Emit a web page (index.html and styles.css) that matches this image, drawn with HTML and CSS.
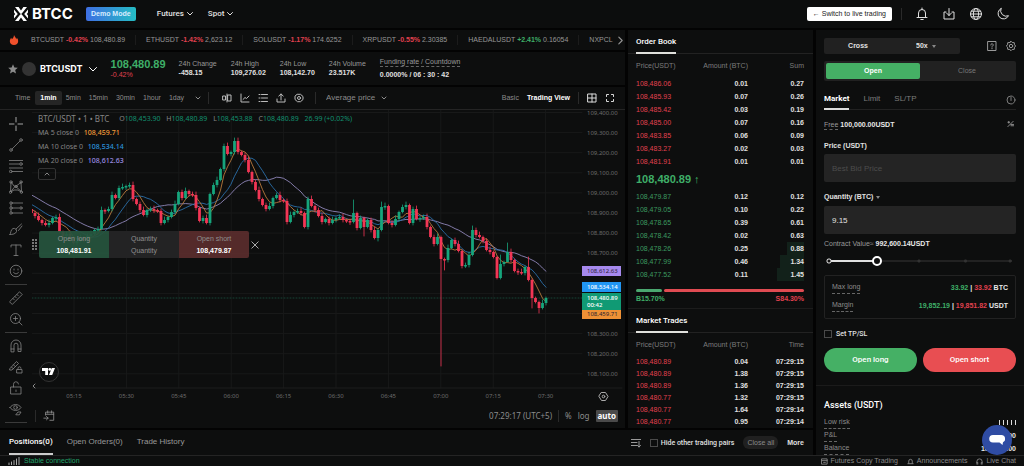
FILE: index.html
```html
<!DOCTYPE html>
<html lang="en">
<head>
    <meta charset="UTF-8">
    <meta name="viewport" content="width=device-width, initial-scale=1.0">
    <title>BTCUSDT | BTCC</title>
    <link rel="stylesheet" href="styles.css">
</head>
<body>
    <header class="topbar">
        <a class="logo" href="#">
            <svg viewBox="0 0 14 14" width="14" height="14" fill="#fff"><path d="M1 0h3.6L7 3.4 9.4 0H13L8.6 5.6 7 7.4 5.4 5.6zM1 14h3.6L7 10.6 9.4 14H13L8.6 8.4 7 6.6 5.4 8.4zM0 2.4 3.8 7 0 11.6V8.4L1.2 7 0 5.6zM14 2.4 10.2 7l3.8 4.6V8.4L12.8 7 14 5.6z"/></svg>
            <span>BTCC</span>
        </a>
        <button class="demo">Demo Mode</button>
        <nav class="nav">
            <button>Futures <svg class="chev" viewBox="0 0 8 8"><path d="M1.5 2.5 4 5l2.5-2.5"/></svg></button>
            <button>Spot <svg class="chev" viewBox="0 0 8 8"><path d="M1.5 2.5 4 5l2.5-2.5"/></svg></button>
        </nav>
        <div class="topbar-right">
            <button class="switch"><span class="arrow">←</span> Switch to live trading</button>
            <span class="sep"></span>
            <button class="icon-btn" aria-label="Notifications"><svg viewBox="0 0 14 14"><path d="M2 10.5h10M3.5 10V6a3.5 3.5 0 0 1 7 0v4l1 .5M3.5 10l-1 .5M5.8 12.5h2.4M7 1v1.5"/></svg></button>
            <button class="icon-btn" aria-label="Download"><svg viewBox="0 0 14 14"><path d="M7 1.5v7M4.5 6 7 8.5 9.500 6M4 5H2v7h10V5h-2"/></svg></button>
            <button class="icon-btn" aria-label="Language"><svg viewBox="0 0 14 14"><circle cx="7" cy="7" r="5.5"/><ellipse cx="7" cy="7" rx="2.600" ry="5.5"/><path d="M1.5 7h11M2.300 4.200h9.400M2.300 9.800h9.400"/></svg></button>
            <button class="icon-btn" aria-label="Theme"><svg viewBox="0 0 14 14"><path d="M5 1.500a5.500 5.500 0 1 0 7.500 7.200A5.600 5.600 0 0 1 5 1.500z"/></svg></button>
        </div>
    </header>

    <main class="layout">
        <section class="market">
            <div class="ticker">
                <svg class="flame" viewBox="0 0 10 12"><path d="M5 0c.5 2 2.500 3 2.500 5 .6-.4.8-1 .8-1.600C9.500 4.500 10 6 10 7.500 10 10 8 12 5 12S0 10 0 7.500C0 5.500 1 4.500 1.500 3.200c.6.600.8 1.200.8 1.800C4 4 4.800 2.500 5 0z" fill="#f0512c"/></svg>
                <div class="ticker-list">
                    <a href="#">BTCUSDT <b class="down">-0.42%</b> 108,480.89</a>
                    <a href="#">ETHUSDT <b class="down">-1.42%</b> 2,623.12</a>
                    <a href="#">SOLUSDT <b class="down">-1.17%</b> 174.6252</a>
                    <a href="#">XRPUSDT <b class="down">-0.55%</b> 2.30385</a>
                    <a href="#">HAEDALUSDT <b class="up">+2.41%</b> 0.16054</a>
                    <a href="#">NXPCL</a>
                </div>
                <button class="next" aria-label="Next"><svg viewBox="0 0 8 8"><path d="M2.500 1 5.500 4l-3 3"/></svg></button>
            </div>

            <div class="pair">
                <button class="pair-name">
                    <svg class="star" viewBox="0 0 10 10"><path d="M5 .3 6.400 3.500l3.400.3-2.600 2.300.8 3.400L5 7.700 2 9.500l.8-3.400L.2 3.800l3.400-.3z" fill="#8b8b8b"/></svg>
                    <span class="coin"></span>
                    <span>BTCUSDT</span>
                    <svg class="chev" viewBox="0 0 8 8"><path d="M.5 2.500 4 6l3.500-3.500"/></svg>
                </button>
                <div class="last">
                    <strong>108,480.89</strong>
                    <span class="down">-0.42%</span>
                </div>
                <dl class="stats">
                    <div><dt>24h Change</dt><dd>-458.15</dd></div>
                    <div><dt>24h High</dt><dd>109,276.02</dd></div>
                    <div><dt>24h Low</dt><dd>108,142.70</dd></div>
                    <div><dt>24h Volume</dt><dd>23.517K</dd></div>
                    <div class="funding"><dt><span class="hint">Funding rate / Countdown</span></dt><dd>0.0000% / 06 : 30 : 42</dd></div>
                </dl>
            </div>

            <div class="toolbar">
                <span class="toolbar-label">Time</span>
                <div class="intervals">
                    <button class="active">1min</button>
                    <button>5min</button>
                    <button>15min</button>
                    <button>30min</button>
                    <button>1hour</button>
                    <button>1day</button>
                    <button class="more-times" aria-label="More intervals"><svg class="chev" viewBox="0 0 8 8"><path d="M2 3l2 2 2-2"/></svg></button>
                </div>
                <span class="sep"></span>
                <div class="tools">
                    <button aria-label="Candles"><svg viewBox="0 0 10 10"><path d="M1 3h2.500v4H1zM6 2h3v6H6zM5 1v8"/></svg></button>
                    <button aria-label="Indicators"><svg viewBox="0 0 10 10"><path d="M1 1v8h8M3 6.500 5 4.500l1.500 1L9 3"/></svg></button>
                    <button aria-label="List"><svg viewBox="0 0 10 10"><path d="M1 1.500h1M3.500 1.500h6M1 5h1M3.500 5h6M1 8.500h1M3.500 8.500h6"/></svg></button>
                    <button aria-label="Share"><svg viewBox="0 0 10 10"><path d="M1 6v3h8V6M5 7V1M2.800 3 5 1l2.200 2"/></svg></button>
                    <button aria-label="Settings"><svg viewBox="0 0 10 10"><path d="M3.500 1.300h3L9 3.500v3L6.500 8.700h-3L1 6.500v-3z"/><circle cx="5" cy="5" r="1.500"/></svg></button>
                </div>
                <span class="sep"></span>
                <label class="pick average">
                    <select aria-label="Price type"><option>Average price</option></select>
                    <svg class="chev" viewBox="0 0 8 8"><path d="M2 3l2 2 2-2"/></svg>
                </label>
                <div class="views">
                    <button>Basic</button>
                    <button class="active">Trading View</button>
                    <span class="sep"></span>
                    <button aria-label="Grid"><svg viewBox="0 0 10 10"><path d="M1 1h8v8H1zM5 1v8M1 5h8"/></svg></button>
                    <button aria-label="Fullscreen"><svg viewBox="0 0 10 10"><path d="M1.500 3.500v-2h2M6.500 1.500h2v2M8.500 6.500v2h-2M3.500 8.500h-2v-2"/></svg></button>
                </div>
            </div>

            <div class="chart">
                <div class="draw">
                    <div class="draw-group">
                        <button aria-label="Cross"><svg viewBox="0 0 14 14" class="bright"><path d="M7 0v5M7 9v5M0 7h5M9 7h5"/></svg></button>
                        <button aria-label="Trend line"><svg viewBox="0 0 14 14"><circle cx="2" cy="12" r="1.300"/><circle cx="12" cy="2" r="1.300"/><path d="M3 11l8-8"/></svg></button>
                        <button aria-label="Fib retracement"><svg viewBox="0 0 14 14"><path d="M0 1.500h14M0 5h10M0 9h14M3.500 12.500H14"/><circle cx="12" cy="5" r="1.300"/><circle cx="1.800" cy="12.500" r="1.300"/></svg></button>
                        <button aria-label="Patterns"><svg viewBox="0 0 14 14"><path d="M2 2.500 1.500 12 6 6.500M2.500 2.500 5 6l1.500.5L12 2.500M12 2.500l.5 9L7 6.800M2.500 11.500 5 10h4l3 2"/><circle cx="2" cy="2" r="1.200"/><circle cx="12" cy="2" r="1.200"/><circle cx="7" cy="6.500" r="1.200"/><circle cx="1.500" cy="12.200" r="1.200"/><circle cx="12.500" cy="12.200" r="1.200"/></svg></button>
                        <button aria-label="Positions"><svg viewBox="0 0 14 14"><path d="M3.500 2H14M3.500 7H10M3.500 12H14M2 3.500v2M2 8.500v2"/><circle cx="2" cy="2" r="1.200"/><circle cx="2" cy="7" r="1.200"/><circle cx="12" cy="7" r="1.200"/><circle cx="2" cy="12" r="1.200"/></svg></button>
                        <button aria-label="Brush"><svg viewBox="0 0 14 14"><path d="M1 12.500c1-1 .500-5 3-6 2-.6 4 .8 3.500 3-.6 2.500-4 3-6.500 3zM7 7l5.500-5M9.500 8.500 13 4"/></svg></button>
                        <button aria-label="Text"><svg viewBox="0 0 14 14"><path d="M2 4V2h10v2M7 2v10.500M5 12.500h4"/></svg></button>
                        <button aria-label="Emoji"><svg viewBox="0 0 14 14"><circle cx="7" cy="7" r="5.800"/><path d="M4.500 8.300c.8 2 4.200 2 5 0M5 5v1M9 5v1"/></svg></button>
                    </div>
                    <hr>
                    <div class="draw-group">
                        <button aria-label="Measure"><svg viewBox="0 0 14 14"><path d="M.8 10.500 10.500.8l2.700 2.700-9.700 9.700zM4 7.500l1.300 1.300M6 5.500l1.300 1.300M8 3.500l1.300 1.300"/></svg></button>
                        <button aria-label="Zoom in"><svg viewBox="0 0 14 14"><circle cx="6.500" cy="6.500" r="5"/><path d="M10.200 10.200 13 13M4.500 6.500h4M6.500 4.500v4"/></svg></button>
                    </div>
                    <hr>
                    <div class="draw-group">
                        <button aria-label="Magnet"><svg viewBox="0 0 14 14"><path d="M2 12.500V6a5 5 0 0 1 10 0v6.500H9V6.200a2 2 0 0 0-4 0v6.300zM2 10h3M9 10h3"/></svg></button>
                        <button aria-label="Keep drawing"><svg viewBox="0 0 14 14"><path d="M1 8.500 7.500 1.500l2 2L3 10H1zM2.500 7l2 2M4.500 4.800l2 2M8 9.500h5V13H8zM9 9.500V8.300a1.500 1.500 0 0 1 3 0"/></svg></button>
                        <button aria-label="Lock"><svg viewBox="0 0 14 14"><path d="M2 6h10v7H2zM4.500 6V3.500a2.500 2.500 0 0 1 5-.5M7 9v1.500"/></svg></button>
                        <button aria-label="Hide"><svg viewBox="0 0 14 14"><path d="M1 5.500c2.500-4 8.500-4 11 0-2.500 4-8.500 4-11 0z"/><circle cx="6.500" cy="5.500" r="1.800"/><path d="M7 12.500l2-2.500h3l-1.500 2.500z"/></svg></button>
                    </div>
                    <hr>
                </div>

                <div class="plot-wrap">
                    <svg id="plot" class="plot" viewBox="32 110 593 294" role="img" aria-label="BTC/USDT 1 minute candles"></svg>

                    <div class="legend">
                        <div class="legend-main"><span>BTC/USDT • 1 • BTC</span> <span class="ohlc">O<i>108,453.90</i> H<i>108,480.89</i> L<i>108,453.88</i> C<i>108,480.89</i> <i>26.99 (+0.02%)</i></span></div>
                        <div>MA 5 close 0 <b class="ma5">108,459.71</b></div>
                        <div>MA 10 close 0 <b class="ma10">108,534.14</b></div>
                        <div>MA 20 close 0 <b class="ma20">108,612.63</b></div>
                        <button aria-label="Collapse legend"><svg class="chev" viewBox="0 0 8 8"><path d="M2 5l2-2 2 2"/></svg></button>
                    </div>

                    <div class="quick">
                        <span class="grip"></span>
                        <button class="quick-long"><span>Open long</span><b>108,481.91</b></button>
                        <div class="quick-qty"><span>Quantity</span><span>Quantity</span></div>
                        <button class="quick-short"><span>Open short</span><b>108,479.87</b></button>
                        <button class="quick-close" aria-label="Close"><svg viewBox="0 0 8 8"><path d="M.8.8l6.400 6.400M7.200.8.8 7.200"/></svg></button>
                    </div>

                    <a class="tv" href="#" aria-label="TradingView"><svg viewBox="0 0 14 10" fill="#fff"><path d="M0 1h6v7H3.200V4H0zM9.800 1H13L10.200 8H7z"/><circle cx="7.800" cy="2.400" r="1.400"/></svg></a>

                    <div class="chart-foot">
                        <span class="sep"></span>
                        <button aria-label="Go to date"><svg viewBox="0 0 14 14"><path d="M3 6V2.500h9.500V12H8M3 5h9.500M5.500 1v2.500M10 1v2.500M1 9.500h5M4 7.500l2 2-2 2"/></svg></button>
                        <div class="foot-right">
                            <span class="clock">07:29:17 (UTC+5)</span>
                            <span class="sep"></span>
                            <button>%</button>
                            <button>log</button>
                            <button class="auto">auto</button>
                        </div>
                    </div>
                </div>
            </div>
        </section>

        <section class="book">
            <h2><span>Order Book</span></h2>
            <table class="orders">
                <thead><tr><th>Price(USDT)</th><th>Amount (BTC)</th><th>Sum</th></tr></thead>
                <tbody class="asks">
                    <tr><td>108,486.06</td><td>0.01</td><td>0.27</td></tr>
                    <tr><td>108,485.93</td><td>0.07</td><td>0.26</td></tr>
                    <tr><td>108,485.42</td><td>0.03</td><td>0.19</td></tr>
                    <tr><td>108,485.00</td><td>0.07</td><td>0.16</td></tr>
                    <tr><td>108,483.85</td><td>0.06</td><td>0.09</td></tr>
                    <tr><td>108,483.27</td><td>0.02</td><td>0.03</td></tr>
                    <tr><td>108,481.91</td><td>0.01</td><td>0.01</td></tr>
                </tbody>
                <tbody class="mid">
                    <tr><td colspan="3">108,480.89<span>↑</span></td></tr>
                </tbody>
                <tbody class="bids">
                    <tr><td>108,479.87</td><td>0.12</td><td>0.12</td></tr>
                    <tr><td>108,479.05</td><td>0.10</td><td>0.22</td></tr>
                    <tr><td>108,478.65</td><td>0.39</td><td>0.61</td></tr>
                    <tr><td>108,478.42</td><td>0.02</td><td>0.63</td></tr>
                    <tr><td>108,478.26</td><td>0.25</td><td class="depth" style="--depth: 30%">0.88</td></tr>
                    <tr><td>108,477.99</td><td>0.46</td><td class="depth" style="--depth: 42%">1.34</td></tr>
                    <tr><td>108,477.52</td><td>0.11</td><td class="depth" style="--depth: 48%">1.45</td></tr>
                </tbody>
            </table>
            <div class="ratio">
                <span class="ratio-buy" style="width: 15.7%"></span>
                <span class="ratio-sell"></span>
            </div>
            <div class="ratio-text"><b class="up">B15.70%</b><b class="down">S84.30%</b></div>

            <h2 class="trades-title"><span>Market Trades</span></h2>
            <table class="trades">
                <thead><tr><th>Price(USDT)</th><th>Amount (BTC)</th><th>Time</th></tr></thead>
                <tbody class="asks">
                    <tr><td>108,480.89</td><td>0.04</td><td>07:29:15</td></tr>
                    <tr><td>108,480.89</td><td>1.38</td><td>07:29:15</td></tr>
                    <tr><td>108,480.89</td><td>1.36</td><td>07:29:15</td></tr>
                    <tr><td>108,480.77</td><td>1.32</td><td>07:29:15</td></tr>
                    <tr><td>108,480.77</td><td>1.64</td><td>07:29:14</td></tr>
                    <tr><td>108,480.77</td><td>0.95</td><td>07:29:14</td></tr>
                </tbody>
            </table>
        </section>

        <section class="positions">
            <div class="pos-tabs">
                <button class="active">Positions(0)</button>
                <button>Open Orders(0)</button>
                <button>Trade History</button>
            </div>
            <div class="pos-tools">
                <button aria-label="Sort"><svg viewBox="0 0 10 10"><path d="M0 1.500h10M0 4.500h6M0 7.500h6M8 3.500v5.500M6.500 7.500 8 9l1.500-1.500"/></svg></button>
                <label class="check"><input type="checkbox"> Hide other trading pairs</label>
                <button class="close-all">Close all</button>
                <a href="#">More</a>
            </div>
        </section>

        <aside class="order">
            <div class="margin-row">
                <div class="margin-mode">
                    <button>Cross</button>
                    <label class="pick leverage">
                        <select aria-label="Leverage"><option>50x</option></select>
                        <span class="caret"></span>
                    </label>
                </div>
                <button class="small-icon" aria-label="Help"><svg viewBox="0 0 10 10"><path d="M1 .5h8v9H1zM3.800 4a1.200 1.200 0 1 1 1.800 1c-.4.200-.6.400-.6 1M5 7.200v.6"/></svg></button>
                <button class="small-icon" aria-label="Preferences"><svg viewBox="0 0 10 10"><path d="M5 .3 6.200 1.500 8.300 1.700 8.500 3.800 9.700 5 8.500 6.200 8.300 8.300 6.200 8.500 5 9.700 3.800 8.500 1.700 8.300 1.500 6.200.3 5 1.500 3.800 1.700 1.700 3.800 1.500z"/><circle cx="5" cy="5" r="1.700"/></svg></button>
            </div>
            <div class="side">
                <button class="active">Open</button>
                <button>Close</button>
            </div>
            <div class="types">
                <button class="active">Market</button>
                <button>Limit</button>
                <button>SL/TP</button>
                <svg viewBox="0 0 10 10"><circle cx="5" cy="5" r="4"/><path d="M5 2.500v3"/></svg>
            </div>
            <div class="free">
                <span><span class="hint">Free</span> <b>100,000.00USDT</b></span>
                <svg viewBox="0 0 8 8"><path d="M1 7l6-6M1 2h2M2 1v2M4.500 6h3M4.500 4.500h3"/></svg>
            </div>
            <label class="field-label" for="price">Price (USDT)</label>
            <input class="field" id="price" type="text" placeholder="Best Bid Price">
            <div class="field-label unit">
                <label for="qty">Quantity (BTC)</label>
                <span class="caret"></span>
            </div>
            <input class="field" id="qty" type="text" value="9.15">
            <div class="contract">Contract Value≈ <b>992,600.14USDT</b></div>
            <input class="slider" type="range" min="0" max="100" value="26" aria-label="Quantity percent">
            <div class="limits">
                <div><span class="hint">Max long</span><b><i class="up">33.92</i> | <i class="down">33.92</i> BTC</b></div>
                <div><span class="hint">Margin</span><b><i class="up">19,852.19</i> | <i class="down">19,851.82</i> USDT</b></div>
            </div>
            <label class="check tpsl"><input type="checkbox"> Set TP/SL</label>
            <div class="actions">
                <button class="long">Open long</button>
                <button class="short">Open short</button>
            </div>
            <div class="assets">
                <h2>Assets (USDT)</h2>
                <div><span class="hint">Low risk</span><span class="bars"><i></i><i></i><i></i><i></i><i></i></span></div>
                <div><span class="hint">P&amp;L</span><b>0.00</b></div>
                <div><span class="hint">Balance</span><b>100,000.00</b></div>
            </div>
        </aside>
    </main>

    <footer class="status">
        <div class="signal"><svg viewBox="0 0 12 8"><path d="M1 8V6M3.500 8V5M6 8V3.500M8.500 8V2M11 8V0"/></svg> Stable connection</div>
        <nav class="status-links">
            <a href="#"><svg viewBox="0 0 8 8"><path d="M1 1h6v6H1zM1 3h6M3 5h2"/></svg>Futures Copy Trading</a>
            <a href="#"><svg viewBox="0 0 8 8"><path d="M1 6.500h6M2 6V3.500a2 2 0 0 1 4 0V6"/></svg>Announcements</a>
            <a href="#"><svg viewBox="0 0 8 8"><path d="M1 7V4a3 3 0 0 1 6 0v3M1 5h1v2M7 5H6v2"/></svg>Live Chat</a>
        </nav>
    </footer>

    <button class="chat" aria-label="Chat"><svg viewBox="0 0 16 12"><path d="M4 1h8a3.800 3.800 0 0 1 2 7.200L13.500 11 10.500 8.600H4A3.800 3.800 0 0 1 4 1z"/></svg></button>

    <script src="chart.js"></script>
</body>
</html>
```

FILE: styles.css
```css
* {
    margin: 0;
    padding: 0;
    box-sizing: border-box;
}

:root {
    --bg: #0d0e0e;
    --line: #222;
    --text: #e0e0e0;
    --green: #3fae68;
    --red: #e0414f;
}

body {
    font-family: 'Liberation Sans', Arial, sans-serif;
    font-size: 7px;
    line-height: 10px;
    background: #030303;
    color: var(--text);
    height: 100vh;
    display: flex;
    flex-direction: column;
    overflow: hidden;
}

button,
input,
select {
    font: inherit;
    color: inherit;
    background: none;
    border: 0;
    outline: 0;
    appearance: none;
}

button,
select {
    cursor: pointer;
}

a {
    color: inherit;
    text-decoration: none;
}

i {
    font-style: normal;
}

svg {
    display: block;
    flex: none;
    stroke-linecap: round;
    stroke-linejoin: round;
}

button svg,
.chev,
.types svg,
.free svg,
.status svg {
    fill: none;
    stroke: currentColor;
    stroke-width: 1;
}

.chev {
    width: 8px;
    height: 8px;
}

.up {
    color: var(--green);
}

.down {
    color: var(--red);
}

.sep {
    width: 1px;
    height: 12px;
    background: #2a2a2a;
}

.hint {
    padding-bottom: 1px;
    border-bottom: 1px dashed #666;
}

.caret {
    border: 2px solid transparent;
    border-top: 3px solid #888;
    border-bottom: 0;
}

/* Top bar */
.topbar {
    display: flex;
    align-items: center;
    flex: none;
    height: 28px;
    padding: 0 14px;
    margin-bottom: 2px;
    background: #0c0d0d;
}

.logo {
    display: flex;
    align-items: center;
    gap: 4px;
    font: 700 15px/24px Inter, sans-serif;
    color: #fff;
}

.demo {
    height: 14px;
    width: 50px;
    margin-left: 13px;
    border-radius: 2px;
    font-weight: 700;
    color: #d8ecff;
    background: linear-gradient(90deg, #3f6fe3, #25bcc4);
}

.nav {
    display: flex;
    gap: 14px;
    margin-left: 21px;
    font: 500 8px/12px Roboto, sans-serif;
}

.nav button,
.pair-name {
    display: flex;
    align-items: center;
    gap: 2px;
}

.topbar-right {
    display: flex;
    align-items: center;
    gap: 13px;
    margin-left: auto;
}

.switch {
    height: 14px;
    padding: 0 6px;
    border-radius: 2px;
    background: #fff;
    color: #222;
}

.topbar-right .sep {
    margin: 0 0 0 -4px;
}

.icon-btn svg {
    width: 14px;
    height: 14px;
}

/* Main grid */
.layout {
    flex: 1;
    min-height: 0;
    display: grid;
    grid-template-columns: minmax(0, 1fr) 185px 208px;
    grid-template-rows: minmax(0, 1fr) 25px;
    grid-template-areas: "market book order" "positions positions order";
    gap: 2px 3px;
}

.market {
    grid-area: market;
    display: flex;
    flex-direction: column;
    gap: 2px;
    min-width: 0;
}

.ticker,
.pair,
.toolbar,
.chart,
.book,
.positions,
.order {
    background: var(--bg);
}

.ticker {
    display: flex;
    align-items: center;
    height: 20px;
    padding: 0 0 0 9px;
    color: #969696;
}

.flame {
    width: 10px;
    height: 10px;
}

.ticker-list {
    flex: 1;
    display: flex;
    overflow: hidden;
    white-space: nowrap;
    margin-left: 2px;
}

.ticker-list a {
    padding: 0 10px;
    border-right: 1px solid #1c1c1c;
}

.ticker-list a:last-child {
    padding-right: 0;
    border: 0;
}

.next svg {
    width: 9px;
    height: 9px;
}

.pair {
    display: flex;
    align-items: center;
    height: 33px;
    padding: 0 8px;
}

.pair-name {
    font: 700 9px/12px Inter, sans-serif;
    color: #fff;
}

.pair-name .star {
    width: 10px;
    height: 10px;
    stroke: none;
}

.coin {
    width: 14px;
    height: 14px;
    margin: 0 2px;
    border-radius: 50%;
    background: #333;
}

.pair-name .chev {
    margin-left: 4px;
}

.last {
    display: flex;
    flex-direction: column;
    margin-left: 14px;
}

.last strong {
    font-size: 11px;
    line-height: 12px;
    color: var(--green);
}

.stats {
    display: flex;
    gap: 14px;
    margin-left: 13px;
    line-height: 9px;
    white-space: nowrap;
}

.stats dt {
    color: #999;
}

.stats dd {
    font-weight: 700;
}

.funding dt {
    margin-top: -2px;
    margin-bottom: 4px;
}

.toolbar {
    display: flex;
    align-items: center;
    height: 22px;
    padding: 0 10px 0 15px;
    color: #8c8c8c;
    white-space: nowrap;
}

.intervals {
    display: flex;
    align-items: center;
    margin-left: 5px;
}

.intervals button {
    height: 14px;
    padding: 0 4px;
}

.intervals .active {
    padding: 0 5px;
    border-radius: 2px;
    background: #252525;
    color: #fff;
    font-weight: 700;
}

.intervals .more-times {
    padding: 0 6px;
}

.tools {
    display: flex;
    gap: 8px;
    margin: 0 11px 0 13px;
    color: #bbb;
}

.tools svg,
.views svg {
    width: 10px;
    height: 10px;
}

.pick {
    display: flex;
    align-items: center;
}

.average {
    gap: 4px;
    margin-left: 10px;
    font-size: 8px;
}

.views {
    display: flex;
    align-items: center;
    gap: 8px;
    margin-left: auto;
}

.views .active {
    color: #fff;
    font-weight: 700;
}

.views button[aria-label] {
    color: #ddd;
}

/* Chart */
.chart {
    flex: 1;
    min-height: 0;
    display: flex;
    margin-top: -2px;
    border-top: 1px solid #242424;
}

.draw {
    width: 32px;
    padding-top: 7px;
    display: flex;
    flex-direction: column;
    align-items: center;
    gap: 6px;
    color: #858585;
}

.draw-group {
    display: flex;
    flex-direction: column;
    gap: 7px;
}

.draw svg {
    width: 14px;
    height: 14px;
    stroke-width: 0.8;
}

.draw .bright {
    color: #ccc;
}

.draw hr {
    width: 22px;
    border: 0;
    border-top: 1px solid #3a3a3a;
}

.plot-wrap {
    position: relative;
    flex: 1;
    min-width: 0;
    display: flex;
    flex-direction: column;
    font-family: 'Noto Sans', sans-serif;
}

.plot {
    flex: 1;
    width: 100%;
    min-height: 0;
}

.plot text {
    font-size: 6px;
    fill: #6c6c6c;
}

.plot .tag-text {
    fill: #fff;
    font-weight: 500;
}

.plot .tag-dark {
    fill: #2a2130;
}

.legend {
    position: absolute;
    top: 2px;
    left: 6px;
    line-height: 14px;
    color: #858585;
    white-space: nowrap;
}

.legend-main {
    display: flex;
    gap: 10px;
    font-size: 8px;
}

.legend i {
    margin-right: 4px;
    color: #12906f;
}

.legend .ohlc {
    font-size: 7px;
}

.legend b {
    font-weight: 500;
    margin-left: 3px;
}

.ma5 {
    color: #f19a37;
}

.ma10 {
    color: #2b93dd;
}

.legend .ma20 {
    color: #9a8be0;
}

.legend button {
    display: block;
    padding: 1px 4px;
    border: 1px solid #333;
    border-radius: 2px;
}

.quick {
    position: absolute;
    top: 121px;
    left: 0;
    display: flex;
    align-items: center;
    font-family: 'Liberation Sans', Arial, sans-serif;
}

.quick-long,
.quick-qty,
.quick-short {
    width: 70px;
    height: 27px;
    display: flex;
    flex-direction: column;
    align-items: center;
    justify-content: center;
    gap: 2px;
    color: #909090;
}

.quick b {
    color: #fff;
}

.quick-long {
    background: rgba(38, 84, 62, 0.94);
    border-radius: 2px 0 0 2px;
}

.quick-qty {
    background: rgba(36, 36, 37, 0.97);
}

.quick-short {
    background: rgba(88, 44, 44, 0.95);
    border-radius: 0 2px 2px 0;
}

.grip {
    width: 6px;
    height: 12px;
    margin-right: 1px;
    background: radial-gradient(circle at 1px 1px, #777 1px, transparent 1px) 0 0 / 3px 3px;
}

.quick-close {
    margin-left: 2px;
    color: #aaa;
}

.quick-close svg {
    width: 8px;
    height: 8px;
}

.tv {
    position: absolute;
    left: 7px;
    bottom: 46px;
    width: 20px;
    height: 20px;
    display: grid;
    place-items: center;
    border: 1px solid #333;
    border-radius: 50%;
}

.tv svg {
    width: 14px;
    height: 10px;
}

.chart-foot {
    flex: none;
    height: 24px;
    display: flex;
    align-items: center;
    gap: 7px;
    padding: 0 7px 0 3px;
    color: #8c8c8c;
}

.chart-foot svg {
    width: 12px;
    height: 12px;
}

.foot-right {
    display: flex;
    align-items: center;
    gap: 6px;
    margin-left: auto;
    font-size: 8px;
}

.auto {
    padding: 1px 2px;
    border-radius: 1px;
    background: #4a4a4a;
    color: #fff;
    font-weight: 700;
}

/* Order book */
.book {
    grid-area: book;
    overflow: hidden;
}

h2 {
    font: 500 8px/12px Roboto, sans-serif;
    color: #fff;
}

.book h2 {
    height: 24px;
    padding-left: 8px;
    border-bottom: 1px solid var(--line);
}

.book h2 span {
    display: inline-block;
    height: 24px;
    padding-top: 6px;
    border-bottom: 2px solid #e0e0dc;
}

.book table {
    width: 168px;
    margin-left: 8px;
    table-layout: fixed;
    border-collapse: collapse;
}

.book th {
    height: 23px;
    font-weight: 400;
    text-align: right;
    color: #7c7c7c;
    white-space: nowrap;
}

.book td {
    height: 13px;
    text-align: right;
    font-weight: 700;
}

.book .trades td {
    height: 12px;
}

.book th:first-child,
.book td:first-child {
    text-align: left;
    font-weight: 400;
}

.book .asks td:first-child {
    color: var(--red);
}

.book .bids td:first-child {
    color: #3c9a60;
}

.book .mid td {
    height: 22px;
    font-size: 11px;
    font-weight: 700;
    color: var(--green);
}

.mid span {
    margin-left: 3px;
    font-weight: 400;
}

.depth {
    background: linear-gradient(to left, #12211a var(--depth), transparent var(--depth));
}

.ratio {
    display: flex;
    gap: 2px;
    margin: 8px 9px 2px 8px;
}

.ratio span {
    height: 3px;
    border-radius: 2px;
}

.ratio-buy {
    background: #4ba870;
}

.ratio-sell {
    flex: 1;
    background: #e04b52;
}

.ratio-text {
    display: flex;
    justify-content: space-between;
    padding: 0 9px 4px 8px;
    border-bottom: 1px solid #1c1c1c;
}

/* Positions bar */
.positions {
    grid-area: positions;
    display: flex;
    justify-content: space-between;
    align-items: center;
    padding: 0 9px;
}

.pos-tabs {
    display: flex;
    gap: 14px;
    font-size: 8px;
    color: #999;
}

.pos-tabs button {
    height: 25px;
    border-bottom: 2px solid transparent;
}

.pos-tabs .active {
    color: #fff;
    border-color: #ccc;
    font-family: Roboto, sans-serif;
    font-weight: 500;
}

.pos-tools {
    display: flex;
    align-items: center;
    gap: 9px;
    font-weight: 700;
}

.pos-tools svg {
    width: 10px;
    height: 10px;
    color: #999;
}

.check {
    display: flex;
    align-items: center;
    gap: 3px;
    font-family: Roboto, sans-serif;
    font-weight: 500;
}

.check input {
    width: 8px;
    height: 8px;
    border: 1px solid #4a4a4a;
}

.close-all {
    height: 13px;
    padding: 0 4px;
    border-radius: 6px;
    background: #202020;
    color: #8a8a8a;
    font-weight: 400;
}

/* Order form */
.order {
    grid-area: order;
    display: flex;
    flex-direction: column;
    padding: 8px 8px 0;
    overflow: hidden;
}

.order > * {
    flex: none;
}

.margin-row {
    display: flex;
    align-items: center;
    height: 16px;
}

.margin-mode {
    display: grid;
    grid-template-columns: 1fr 1fr;
    justify-items: center;
    flex: 1;
    margin-right: 25px;
    line-height: 16px;
    font-weight: 700;
    border-radius: 2px;
    background: #212121;
}

.leverage {
    gap: 4px;
}

.small-icon {
    margin-left: 2px;
    color: #999;
}

.small-icon + .small-icon {
    margin-left: 9px;
}

.small-icon svg,
.types svg {
    width: 10px;
    height: 10px;
}

.side {
    display: flex;
    height: 20px;
    margin-top: 7px;
    padding: 2px;
    border-radius: 2px;
    background: #212121;
    color: #777;
}

.side button {
    flex: 1;
    border-radius: 2px;
}

.side .active {
    background: #45b065;
    color: #fff;
    font-weight: 700;
}

.types {
    display: flex;
    align-items: center;
    gap: 14px;
    height: 20px;
    margin: 9px 0 10px;
    font-size: 8px;
    color: #7c7c7c;
    border-bottom: 1px solid var(--line);
}

.types button {
    height: 20px;
    border-bottom: 2px solid transparent;
}

.types .active {
    color: #fff;
    border-color: #ddd;
    font-family: Roboto, sans-serif;
    font-weight: 700;
}

.types svg {
    margin-left: auto;
}

.free {
    display: flex;
    justify-content: space-between;
    height: 10px;
    padding-right: 2px;
    color: #999;
}

.free svg {
    width: 7px;
    height: 8px;
}

.order b {
    color: #e8e8e8;
}

.field-label {
    height: 10px;
    margin: 11px 0 3px;
    font-weight: 700;
}

.field {
    height: 28px;
    width: 100%;
    padding: 0 8px;
    border-radius: 2px;
    background: #242424;
    font-size: 8px;
}

.field::placeholder {
    color: #4c4c4c;
}

.unit {
    display: flex;
    align-items: center;
    gap: 3px;
    margin-bottom: 4px;
    margin-top: 10px;
}

.contract {
    margin-top: 5px;
    color: #999;
}

.slider {
    height: 10px;
    margin: 7px 4px 9px 2px;
    background:
        radial-gradient(circle at 3px 5px, #111 1px, #ddd 2px, transparent 3px),
        radial-gradient(circle at 50% 5px, #333 1px, transparent 2px),
        radial-gradient(circle at 75% 5px, #333 1px, transparent 2px),
        radial-gradient(circle at 99% 5px, #333 1px, transparent 2px),
        linear-gradient(90deg, transparent 4px, #e0e0e0 4px 26%, #222 26%) center / 100% 2px no-repeat;
}

.slider::-webkit-slider-thumb {
    appearance: none;
    width: 10px;
    height: 10px;
    border: 2px solid #fff;
    border-radius: 50%;
    background: #111;
}

.limits {
    padding: 3px 7px;
    border: 1px solid #222;
    border-radius: 2px;
}

.limits div,
.assets div {
    display: flex;
    justify-content: space-between;
    align-items: center;
}

.limits div {
    height: 18px;
}

.limits,
.assets {
    color: #8c8c8c;
}

.limits .up {
    color: var(--green);
}

.limits .down {
    color: var(--red);
}

.tpsl {
    margin: 10px 0 9px;
    gap: 4px;
}

.actions {
    display: grid;
    grid-template-columns: 1fr 1fr;
    gap: 6px;
    font: 500 8px/12px Roboto, sans-serif;
    color: #fff;
}

.actions button {
    height: 24px;
    border-radius: 12px;
}

.long {
    background: #45b065;
}

.short {
    background: #e84e52;
}

.assets {
    margin: 13px -8px 0;
    padding: 13px 8px 0;
    border-top: 1px solid #1b1b1b;
}

.assets h2 {
    font: 500 9px/12px Roboto, sans-serif;
    margin-bottom: 5px;
}

.assets div {
    height: 13px;
}

.bars {
    display: flex;
    gap: 3px;
}

.bars i {
    width: 1px;
    height: 5px;
    background: #ddd;
}

/* Status bar */
.status {
    flex: none;
    height: 11px;
    display: flex;
    align-items: center;
    justify-content: space-between;
    padding: 0 8px;
    background: var(--bg);
    border-top: 1px solid #242424;
    color: #8a8a8a;
}

.signal {
    display: flex;
    align-items: center;
    gap: 4px;
    color: #23a36c;
}

.signal svg {
    width: 12px;
    height: 8px;
    color: #aaa;
}

.status-links {
    display: flex;
    gap: 9px;
}

.status-links a {
    display: flex;
    align-items: center;
    gap: 3px;
}

.status-links svg {
    width: 7px;
    height: 7px;
}

.chat {
    position: fixed;
    right: 12px;
    bottom: 11px;
    width: 30px;
    height: 30px;
    display: grid;
    place-items: center;
    border-radius: 50%;
    background: #2f4ca3;
}

.chat svg {
    width: 16px;
    height: 12px;
    stroke: none;
    fill: #fff;
}
```

FILE: chart.js
```js
const plot = document.getElementById('plot');
const NS = 'http://www.w3.org/2000/svg';

const UP = '#16a57c';
const DOWN = '#f23655';
const STEP = 3.5;
const LAST_X = 546;
const BOTTOM = 388;

// Candle closes on the plot's vertical scale, one per minute
const closes = [
    213, 216, 220, 223, 225, 223, 218, 217, 232, 236, 234, 239, 243, 241, 238, 240,
    236, 234, 230, 229, 210, 211, 209, 195, 198, 188, 187, 186, 185, 199, 204, 210,
    215, 210, 209, 210, 211, 223, 220, 217, 212, 204, 192, 198, 191, 194, 195, 208,
    221, 218, 223, 194, 185, 180, 169, 146, 154, 152, 141, 152, 155, 160, 172, 182,
    190, 199, 205, 209, 206, 198, 195, 200, 201, 222, 215, 212, 211, 213, 227, 199,
    206, 210, 216, 222, 219, 223, 220, 218, 217, 220, 221, 222, 213, 228, 218, 227,
    220, 230, 238, 230, 207, 206, 223, 225, 219, 212, 207, 205, 223, 209, 219, 218,
    217, 227, 237, 244, 237, 259, 260, 248, 240, 244, 251, 266, 265, 255, 230, 235,
    237, 241, 250, 252, 257, 278, 264, 262, 252, 260, 271, 272, 273, 267, 280,
    298, 302, 308, 303, 298
];

// Long wicks, counted back from the last candle: [top, bottom]
const wicks = {
    89: [138, 154], 55: [200, 223], 52: [217, 236], 48: [229, 241], 47: [202, 231],
    30: [236, 366], 29: [258, 270], 21: [226, 256], 14: [256, 279], 13: [255, 279],
    11: [243, 262], 5: [257, 281], 4: [279, 308], 2: [301, 313]
};

function draw(tag, attrs, text) {
    const el = document.createElementNS(NS, tag);
    for (const key in attrs) el.setAttribute(key, attrs[key]);
    if (text) el.textContent = text;
    plot.appendChild(el);
}

const xAt = i => LAST_X - STEP * (closes.length - 1 - i);

// Price grid and labels
for (let i = 0; i < 14; i++) {
    const y = 112.5 + i * 20.1;
    draw('line', { x1: 32, x2: 582, y1: y, y2: y, stroke: '#181919' });
    if (i < 8 || i > 10) {
        draw('text', { x: 587, y: y + 2 }, (109400 - i * 100).toLocaleString('en-US') + '.00');
    }
}

// Time grid and labels
for (let i = 0; i < 10; i++) {
    const x = 74 + i * 52.4;
    const minutes = 315 + i * 15;
    const label = '0' + Math.floor(minutes / 60) + ':' + String(minutes % 60).padStart(2, '0');
    draw('line', { x1: x, x2: x, y1: 110, y2: BOTTOM, stroke: '#181919' });
    draw('text', { x: x, y: 398, 'text-anchor': 'middle' }, label);
}
draw('line', { x1: 32, x2: 622, y1: BOTTOM, y2: BOTTOM, stroke: '#1c1c1c' });
draw('path', { d: 'M35 384l-2 2 2 2', stroke: '#888', fill: 'none' });

// Last price
draw('line', { x1: 32, x2: 582, y1: 298, y2: 298, stroke: '#174234', 'stroke-dasharray': '1 2' });

// Moving averages; the earlier closes lead in from off the left edge
const lead = Array.from({ length: 20 }, (_, i) => 175 + i * 1.9);
const all = lead.concat(closes);
[[20, '#8f86b8'], [10, '#2a6ea8'], [5, '#b97a3c']].forEach(([size, color]) => {
    const points = closes.map((_, i) => {
        const part = all.slice(i + 21 - size, i + 21);
        return xAt(i) + ',' + part.reduce((a, b) => a + b, 0) / size;
    });
    draw('polyline', { points: points.join(' '), fill: 'none', stroke: color, 'stroke-width': 0.9 });
});

// Candles
closes.forEach((close, i) => {
    const open = i ? closes[i - 1] : 209;
    const color = close <= open ? UP : DOWN;
    const x = xAt(i);
    const top = Math.min(open, close);
    const height = Math.max(Math.abs(open - close), 1.5);
    const wick = wicks[closes.length - 1 - i] || [top - 1 - i % 3, top + height + 1 + i % 2];
    draw('line', { x1: x, x2: x, y1: wick[0], y2: wick[1], stroke: color, 'stroke-width': 0.8 });
    draw('rect', { x: x - 1.4, y: top, width: 2.8, height: height, fill: color });
});

// Price tags
[
    [266, 10, '#a689ee', '108,612.63', 'tag-dark'],
    [282, 10, '#2196f3', '108,534.14', 'tag-text'],
    [309, 10, '#ee9135', '108,459.71', 'tag-dark'],
    [293, 17, '#109a74', '108,480.89', 'tag-text']
].forEach(([y, height, fill, text, cls]) => {
    draw('rect', { x: 582, y: y, width: 39, height: height, fill: fill });
    draw('text', { x: 587, y: y + 7, class: cls }, text);
});
draw('text', { x: 587, y: 307, class: 'tag-text' }, '00:42');

// Axis settings
draw('path', { d: 'M601.500 392.500h4l2.500 4-2.500 4h-4l-2.500-4z', fill: 'none', stroke: '#aaa' });
draw('circle', { cx: 603.5, cy: 396.5, r: 1.3, fill: 'none', stroke: '#aaa' });
```
